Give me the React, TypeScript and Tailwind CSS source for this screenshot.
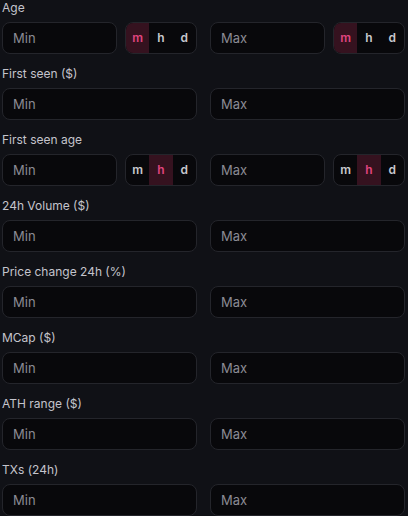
import { useState } from 'react';

type Unit = 'm' | 'h' | 'd';

interface FilterField {
  label: string;
  unit?: Unit;
}

const fields: FilterField[] = [
  { label: 'Age', unit: 'm' },
  { label: 'First seen ($)' },
  { label: 'First seen age', unit: 'h' },
  { label: '24h Volume ($)' },
  { label: 'Price change 24h (%)' },
  { label: 'MCap ($)' },
  { label: 'ATH range ($)' },
  { label: 'TXs (24h)' },
];

function UnitToggle({ initial }: { initial: Unit }) {
  const [unit, setUnit] = useState<Unit>(initial);
  const units: Unit[] = ['m', 'h', 'd'];

  return (
    <div className="flex h-8 w-[72px] shrink-0 overflow-hidden rounded-lg border border-[#24252b] bg-[#08080b]">
      {units.map((u) => (
        <button
          key={u}
          onClick={() => setUnit(u)}
          className={
            u === unit
              ? 'flex-1 bg-[#35121f] text-[12px] font-semibold text-[#e0457f]'
              : 'flex-1 text-[12px] font-semibold text-[#c8c8ce]'
          }
        >
          {u}
        </button>
      ))}
    </div>
  );
}

function RangeInput({ placeholder, unit }: { placeholder: string; unit?: Unit }) {
  return (
    <div className="flex gap-2">
      <input
        placeholder={placeholder}
        className="h-8 min-w-0 flex-1 rounded-lg border border-[#24252b] bg-[#08080b] px-[10px] text-[13px] text-[#d2d2d8] outline-none placeholder:text-[#8b8b94]"
      />
      {unit && <UnitToggle initial={unit} />}
    </div>
  );
}

export default function App() {
  return (
    <div
      className="min-h-screen bg-[#101116] px-[2px] pt-0"
      style={{ fontFamily: 'Inter, "Noto Sans", sans-serif' }}
    >
      <div className="-mt-[2px] flex flex-col gap-[10px] pr-[1px]">
        {fields.map((field) => (
          <div key={field.label} className="flex flex-col gap-1">
            <span className="h-5 text-[12px] leading-5 text-[#c4c4cc]">{field.label}</span>
            <div className="grid grid-cols-2 gap-[13px]">
              <RangeInput placeholder="Min" unit={field.unit} />
              <RangeInput placeholder="Max" unit={field.unit} />
            </div>
          </div>
        ))}
      </div>
    </div>
  );
}
